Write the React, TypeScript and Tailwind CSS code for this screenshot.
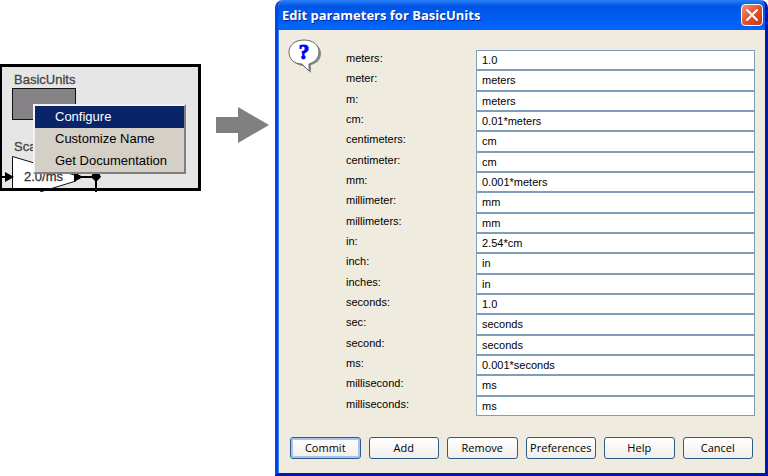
import React from "react";

const units: [string, string][] = [
  ["meters", "1.0"],
  ["meter", "meters"],
  ["m", "meters"],
  ["cm", "0.01*meters"],
  ["centimeters", "cm"],
  ["centimeter", "cm"],
  ["mm", "0.001*meters"],
  ["millimeter", "mm"],
  ["millimeters", "mm"],
  ["in", "2.54*cm"],
  ["inch", "in"],
  ["inches", "in"],
  ["seconds", "1.0"],
  ["sec", "seconds"],
  ["second", "seconds"],
  ["ms", "0.001*seconds"],
  ["millisecond", "ms"],
  ["milliseconds", "ms"],
];

const actions = ["Commit", "Add", "Remove", "Preferences", "Help", "Cancel"];
const menuItems = ["Configure", "Customize Name", "Get Documentation"];

function Diagram() {
  return (
    <section className="relative h-[127px] w-[201px] shrink-0 border-[3px] border-l-2 border-black bg-[#e6e6e6]">
      {/* Coordinates start at the outer corner of the frame */}
      <svg
        className="absolute -top-[3px] -left-[2px] h-[128px] w-[201px] font-['Liberation_Sans',Arial,sans-serif]"
        viewBox="0 0 201 128"
      >
        <rect x="12.5" y="24.5" width="63" height="31" fill="#858385" stroke="#111" />
        <text x="14" y="20" fontSize="13" fill="#444" stroke="#444" strokeWidth="0.3">BasicUnits</text>
        <text x="14" y="87" fontSize="13" fill="#444" stroke="#444" strokeWidth="0.3">Scale</text>
        <path d="M12.500 124V92.500L81 113L76 117L53 124Z" fill="#fff" />
        <path d="M12.500 124V92.500L81 113M76 117L40 128" fill="none" stroke="#111" />
        <text x="24" y="117" fontSize="13" fill="#333" stroke="#333" strokeWidth="0.3">2.0/ms</text>
        <path d="M0 113H8M80 113H96M96 113V128" fill="none" stroke="#000" strokeWidth="2" />
        <path d="M5 108L14 113L5 118ZM74 108L83 113L74 118ZM91 113L93 109L96 108L99 109L101 113L96 118Z" fill="#000" />
      </svg>
      <ul
        role="menu"
        className="absolute top-[37px] left-[31px] w-[153px] border-2 border-t-[#f4f2ee] border-r-[#808080] border-b-[#808080] border-l-[#f4f2ee] bg-[#d4d0c8] font-['Liberation_Sans',Arial,sans-serif] text-[13px] text-black"
      >
        {menuItems.map((item, i) => (
          <li key={item} role="none">
            <button
              type="button"
              role="menuitem"
              className={`block h-[22px] w-full pl-5 text-left leading-[22px] whitespace-nowrap ${i === 0 ? "bg-[#0a246a] text-white" : ""}`}
            >
              {item}
            </button>
          </li>
        ))}
      </ul>
    </section>
  );
}

function QuestionIcon() {
  return (
    <svg className="h-9 w-[34px] shrink-0" viewBox="0 0 34 36">
      <path
        d="M18 4C27 4 33 9 33 15C33 21 30 25 23 27V35L15 28C7 27 3 22 3 15C3 9 9 4 18 4Z"
        fill="#8b8a86"
      />
      <path
        d="M16 2C25 2 31 7 31 14C31 20 27 24 21 26V33L14 26C6 26 1 21 1 14C1 7 7 2 16 2Z"
        fill="#fff"
        stroke="#666"
      />
      <text x="16" y="21" textAnchor="middle" fontSize="21" fontWeight="bold" fill="#0000f0" stroke="#0000f0" strokeWidth="1" className="font-['Liberation_Serif',serif]">?</text>
    </svg>
  );
}

function Dialog() {
  return (
    <form
      onSubmit={(e) => e.preventDefault()}
      className="flex min-w-0 flex-1 flex-col overflow-hidden rounded-t-lg border-x-[3px] border-b-[3px] border-[#0842e8] border-r-[#0019a8] border-b-[#0019a8] bg-[#efebde]"
    >
      <header className="flex h-[30px] shrink-0 items-center justify-between bg-linear-to-b from-[#2a80f8] via-[#0054e3] via-20% to-[#0066ff] pr-0.5 pl-1">
        <h1 className="font-['Open_Sans',sans-serif] text-[13px] leading-4 font-bold text-white [text-shadow:1px_1px_#0a2a90]">
          Edit parameters for BasicUnits
        </h1>
        <button
          type="button"
          aria-label="Close"
          className="flex size-[22px] items-center justify-center rounded-sm border border-white bg-linear-to-br from-[#f0907a] via-[#e0522c] to-[#c63a10]"
        >
          <svg className="size-[14px]" viewBox="0 0 14 14" stroke="#fff" strokeWidth="2" strokeLinecap="round">
            <path d="M2 2L12 12M12 2L2 12" />
          </svg>
        </button>
      </header>
      <div className="flex flex-1 border-l border-[#3a80f0] pt-5 pr-[10px] pl-[9px]">
        <div className="-mt-3 w-[58px] shrink-0">
          <QuestionIcon />
        </div>
        <div className="flex flex-1 flex-col font-['Liberation_Sans',Arial,sans-serif] text-[11px] text-black">
          {units.map(([name, value]) => (
            <div key={name} className="flex flex-1">
              <label htmlFor={name} className="w-[130px] shrink-0 leading-4">
                {name}:
              </label>
              <input
                id={name}
                defaultValue={value}
                className="h-full w-0 flex-1 border border-[#7f9db9] border-b-[#b4c8d8] bg-white pl-[5px] outline-none last:border-b-[#7f9db9]"
              />
            </div>
          ))}
        </div>
      </div>
      <footer className="flex gap-2 border-l border-[#3a80f0] pt-[21px] pr-3 pb-[14px] pl-[11px]">
        {actions.map((action, i) => (
          <button
            key={action}
            type={i === 0 ? "submit" : "button"}
            className={`h-[22px] w-0 flex-1 rounded-[3px] border border-[#2d5a88] bg-linear-to-b from-white to-[#f0eee8] font-['Open_Sans',sans-serif] text-[11px] leading-5 text-black ${i === 0 ? "inset-ring-2 inset-ring-[#a9c3f0]" : ""}`}
          >
            {action}
          </button>
        ))}
      </footer>
    </form>
  );
}

export default function App() {
  return (
    <main className="flex min-h-screen bg-white">
      <div className="flex shrink-0 items-start pt-16">
        <Diagram />
        <svg className="mt-[43px] mr-[6px] ml-[15px] h-9 w-[53px] shrink-0" viewBox="0 0 53 36" fill="#808080">
          <path d="M0 10H22V0L53 18L22 36V26H0Z" />
        </svg>
      </div>
      <Dialog />
    </main>
  );
}
